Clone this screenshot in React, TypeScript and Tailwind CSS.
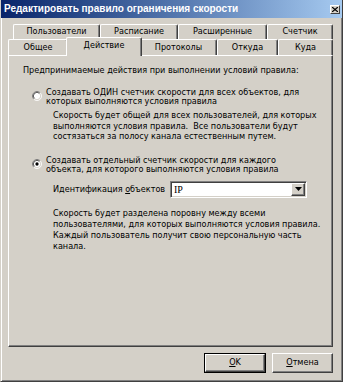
import React from 'react';

const font = "[font-family:'DejaVu_Sans_Condensed','Liberation_Sans',sans-serif]";

const Tab = ({ label, className }: { label: string; className: string }) => (
  <div
    className={`flex items-center justify-center border-t border-l border-white border-r border-r-[#404040] rounded-tl-[2px] rounded-tr-[2px] shadow-[inset_-1px_0_0_#808080] text-[9px] text-black ${className}`}
  >
    {label}
  </div>
);

const Radio = ({ checked }: { checked?: boolean }) => (
  <svg width="10" height="10" viewBox="0 0 11 11" className="shrink-0 mt-[3px]">
    <circle cx="5.5" cy="5.5" r="4" fill="#ffffff" />
    <path d="M 1.96 9.04 A 5 5 0 0 1 9.04 1.96" stroke="#808080" strokeWidth="1" fill="none" />
    <path d="M 9.04 1.96 A 5 5 0 0 1 1.96 9.04" stroke="#ffffff" strokeWidth="1" fill="none" />
    <path d="M 2.67 8.33 A 4 4 0 0 1 8.33 2.67" stroke="#404040" strokeWidth="1" fill="none" />
    <path d="M 8.33 2.67 A 4 4 0 0 1 2.67 8.33" stroke="#d4d0c8" strokeWidth="1" fill="none" />
    {checked && <circle cx="5.5" cy="5.5" r="1.8" fill="#000000" />}
  </svg>
);

export default function App() {
  return (
    <div
      className={`w-[343px] h-[382px] bg-[#d4d0c8] flex flex-col border-l border-l-[#d4d0c8] border-r border-r-[#404040] border-b border-b-[#404040] shadow-[inset_1px_0_0_#ffffff,inset_-1px_-1px_0_#808080] ${font}`}
    >
      {/* Title bar */}
      <div className="h-[18px] shrink-0 flex items-center justify-between pl-[3px] pr-[2px] bg-gradient-to-r from-[#0a246a] to-[#a6caf0]">
        <span className="text-white font-bold text-[10px] [font-family:'Liberation_Sans',sans-serif] leading-none">
          Редактировать правило ограничения скорости
        </span>
        <div className="w-[10px] h-[9px] bg-[#d4d0c8] border-t border-l border-white border-r border-b border-r-[#404040] border-b-[#404040] flex items-center justify-center">
          <svg width="6" height="5" viewBox="0 0 6 5">
            <path d="M0 0 L6 5 M6 0 L0 5" stroke="#000" strokeWidth="1.2" />
          </svg>
        </div>
      </div>

      <div className="flex-1 flex flex-col pl-[7px] pr-[9px] pt-[6px]">
        {/* Tabs row 1 */}
        <div className="flex h-[15px] ml-[5px]">
          <Tab label="Пользователи" className="w-[87px]" />
          <Tab label="Расписание" className="w-[78px]" />
          <Tab label="Расширенные" className="w-[89px]" />
          <Tab label="Счетчик" className="w-[66px]" />
        </div>
        {/* Tabs row 2 */}
        <div className="flex h-[16px]">
          <Tab label="Общее" className="w-[60px] h-full" />
          <Tab
            label="Действие"
            className="w-[76px] h-[19px] -mt-[2px] -mx-[2px] relative z-10 bg-[#d4d0c8] pb-[2px]"
          />
          <Tab label="Протоколы" className="w-[77px] h-full" />
          <Tab label="Откуда" className="w-[61px] h-full" />
          <Tab label="Куда" className="w-[55px] h-full" />
        </div>

        {/* Panel */}
        <div className="h-[292px] border-t border-l border-white border-r border-b border-r-[#404040] border-b-[#404040] shadow-[inset_-1px_-1px_0_#808080] pl-[14px] pt-[9px] text-[9px] text-black">
          <div className="leading-[10px]">Предпринимаемые действия при выполнении условий правила:</div>

          <div className="flex gap-[4px] ml-[9px] mt-[13px]">
            <Radio />
            <div className="leading-[9px]">
              Создавать ОДИН счетчик скорости для всех объектов, для
              <br />
              которых выполняются условия правила
            </div>
          </div>
          <div className="ml-[30px] mt-[4px] leading-[10.5px]">
            Скорость будет общей для всех пользователей, для которых
            <br />
            выполняются условия правила.&nbsp; Все пользователи будут
            <br />
            состязаться за полосу канала естественным путем.
          </div>

          <div className="flex gap-[4px] ml-[9px] mt-[14px]">
            <Radio checked />
            <div className="leading-[9px]">
              Создавать отдельный счетчик скорости для каждого
              <br />
              объекта, для которого выполняются условия правила
            </div>
          </div>

          <div className="flex items-center ml-[30px] mt-[7px]">
            <span className="w-[117px] leading-[10px]">
              Идентификация <u>о</u>бъектов
            </span>
            <div className="w-[137px] h-[17px] flex bg-white border-t border-l border-[#808080] border-r border-b border-r-white border-b-white shadow-[inset_1px_1px_0_#404040,inset_-1px_-1px_0_#d4d0c8]">
              <div className="flex-1 flex items-center pl-[3px] [font-family:'Liberation_Serif',serif] text-[10px]">IP</div>
              <div className="w-[14px] my-[1px] mr-[1px] bg-[#d4d0c8] border-t border-l border-white border-r border-b border-r-[#404040] border-b-[#404040] shadow-[inset_-1px_-1px_0_#808080] flex items-center justify-center">
                <svg width="7" height="4" viewBox="0 0 7 4">
                  <path d="M0 0 H7 L3.5 4 Z" fill="#000" />
                </svg>
              </div>
            </div>
          </div>

          <div className="ml-[30px] mt-[10px] leading-[11px]">
            Скорость будет разделена поровну между всеми
            <br />
            пользователями, для которых выполняются условия правила.
            <br />
            Каждый пользователь получит свою персональную часть
            <br />
            канала.
          </div>
        </div>

        {/* Buttons */}
        <div className="flex justify-end gap-[6px] mt-[6px] text-[9px] text-black">
          <div className="w-[62px] h-[20px] border border-black">
            <div className="w-full h-full flex items-center justify-center border-t border-l border-white border-r border-b border-r-[#404040] border-b-[#404040] shadow-[inset_-1px_-1px_0_#808080]">
              <span>
                <u>O</u>K
              </span>
            </div>
          </div>
          <div className="w-[61px] h-[20px] flex items-center justify-center border-t border-l border-white border-r border-b border-r-[#404040] border-b-[#404040] shadow-[inset_-1px_-1px_0_#808080]">
            <span>
              <u>О</u>тмена
            </span>
          </div>
        </div>
      </div>
    </div>
  );
}
